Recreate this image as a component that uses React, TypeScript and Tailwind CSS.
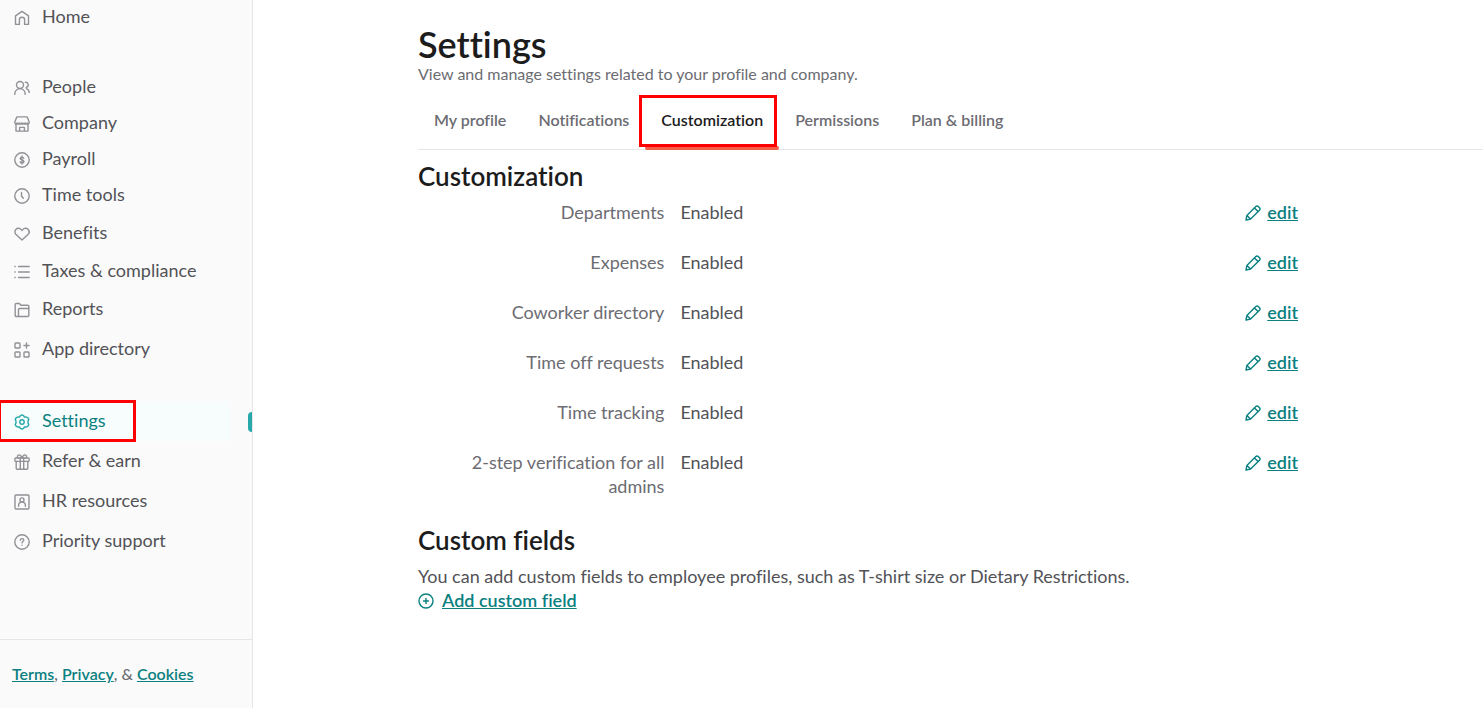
import React from "react";

type NavItem = {
  label: string;
  icon: React.ReactNode;
  active?: boolean;
};

function Icon({ children, className = "" }: { children: React.ReactNode; className?: string }) {
  return (
    <svg
      viewBox="0 0 16 16"
      fill="none"
      stroke="currentColor"
      strokeWidth="1.4"
      strokeLinecap="round"
      strokeLinejoin="round"
      aria-hidden="true"
      className={`size-4 shrink-0 ${className}`}
    >
      {children}
    </svg>
  );
}

const homeIcon = (
  <path d="M1.5 14.4V5.800L8 1.400l6.500 4.400v8.600h-3.900V9.800a2.600 2.600 0 0 0-5.200 0v4.600z" />
);

const peopleIcon = (
  <>
    <circle cx="6" cy="5" r="3.500" />
    <path d="M.8 14.400v-.6a5.200 5.200 0 0 1 10.400 0v.6M11.400 2.200a2.600 2.600 0 0 1 1.400 4.900l-.6.300M12.400 8.600c1.800.6 2.800 1.900 2.800 4" />
  </>
);

const companyIcon = (
  <>
    <path d="M2.800.9h10.400l2 5.100v.6a1.500 1.500 0 0 1-1.500 1.500H2.300A1.500 1.500 0 0 1 .8 6.600V6zM2 8.200v6.900h12V8.200M5.600 15v-3.600h4.800V15" />
    <path strokeDasharray="1.500 1.200" d="M2 7.200h12" />
  </>
);

const payrollIcon = (
  <>
    <circle cx="8" cy="8" r="7.200" />
    <path d="M9.800 6.200C9.500 5.500 8.900 5.100 8 5.100c-1 0-1.800.5-1.800 1.400 0 2 3.700.9 3.700 3 0 .9-.8 1.500-1.900 1.500-1 0-1.700-.5-1.900-1.200M8 4v8" />
  </>
);

const clockIcon = (
  <>
    <circle cx="8" cy="8" r="7.200" />
    <path d="M7.500 4.400V8l1.800 2.200" />
  </>
);

const heartIcon = (
  <path d="M8 14 2.100 8.600C.6 7.100.5 4.700 2 3.300c1.500-1.500 3.900-1.300 5.200.3l.8.9.8-.9c1.300-1.600 3.700-1.800 5.200-.3s1.400 3.800-.1 5.300z" />
);

const listIcon = (
  <path d="M4.600 2.500h10.600M4.600 8h10.600M4.600 13.500h10.600M.9 2.500h.3M.9 8h.3M.9 13.500h.3" />
);

const reportsIcon = (
  <>
    <path d="M4.400 14.500H2.200a1 1 0 0 1-1-1V2.500a1 1 0 0 1 1-1h3.200l1.400 1.700h7a1 1 0 0 1 1 1v9.300a1 1 0 0 1-1 1z" />
    <path d="M4.500 14.400V7.500a1 1 0 0 1 1-1h9.200" />
  </>
);

const appsIcon = (
  <>
    <rect x="1" y="1" width="5" height="5" rx=".8" />
    <rect x="1" y="10" width="5" height="5" rx=".8" />
    <rect x="10" y="10" width="5" height="5" rx=".8" />
    <path d="M12.500 1v5M10 3.500h5" />
  </>
);

const settingsIcon = (
  <>
    <path d="M6.400 1.600 8 .9l1.600.7.9 1.500 1.900-.1 1.500.9.9 1.500-.8 1.700v1.800l.8 1.700-.9 1.500-1.500.9-1.900-.1-.9 1.500-1.600.7-1.600-.7-.9-1.500-1.900.1-1.500-.9-.9-1.500.8-1.700V7.100l-.8-1.700.9-1.500L3.600 3l1.900.1z" />
    <circle cx="8" cy="8" r="2.200" />
  </>
);

const giftIcon = (
  <>
    <rect x=".9" y="4" width="14.200" height="3.400" rx=".8" />
    <path d="M2.200 7.400v6.800a1 1 0 0 0 1 1h9.600a1 1 0 0 0 1-1V7.400M6.300 4v11M9.700 4v11" />
    <path d="M8 4C7.400 2 6.400.9 5 .9 3.300.9 2.800 3 4.200 4M8 4c.6-2 1.600-3.100 3-3.100 1.700 0 2.200 2.100.8 3.100" />
  </>
);

const resourcesIcon = (
  <>
    <rect x="1" y="1" width="14" height="14" rx="1" />
    <circle cx="8" cy="5.900" r="2" />
    <path d="M4.600 12.200v-.6c0-2 1.400-3.500 3.400-3.500s3.400 1.500 3.400 3.500v.6" />
  </>
);

const supportIcon = (
  <>
    <circle cx="8" cy="8" r="7.200" />
    <path d="M6.300 6.200c.1-1 .8-1.600 1.800-1.600s1.700.6 1.700 1.500c0 1.400-1.800 1.400-1.800 2.800M8 11.200v.1" />
  </>
);

const topItems: NavItem[] = [{ label: "Home", icon: homeIcon }];

const teamItems: NavItem[] = [
  { label: "People", icon: peopleIcon },
  { label: "Company", icon: companyIcon },
  { label: "Payroll", icon: payrollIcon },
  { label: "Time tools", icon: clockIcon },
];

const recordItems: NavItem[] = [
  { label: "Benefits", icon: heartIcon },
  { label: "Taxes & compliance", icon: listIcon },
  { label: "Reports", icon: reportsIcon },
];

const appItems: NavItem[] = [{ label: "App directory", icon: appsIcon }];

const accountItems: NavItem[] = [
  { label: "Settings", icon: settingsIcon, active: true },
  { label: "Refer & earn", icon: giftIcon },
  { label: "HR resources", icon: resourcesIcon },
  { label: "Priority support", icon: supportIcon },
];

const tabs = ["My profile", "Notifications", "Customization", "Permissions", "Plan & billing"];

const features = [
  "Departments",
  "Expenses",
  "Coworker directory",
  "Time off requests",
  "Time tracking",
  "2-step verification for all admins",
];

function NavGroup({
  items,
  rowClass,
  className = "",
}: {
  items: NavItem[];
  rowClass: string;
  className?: string;
}) {
  return (
    <ul className={className}>
      {items.map((item) => (
        <li key={item.label} className="relative">
          <a
            href="#"
            aria-current={item.active ? "page" : undefined}
            className={`mr-[22px] flex items-center gap-3 pb-0.5 pl-3.5 ${rowClass} ${
              item.active ? "bg-[#f7fdfd] text-[#0a8080]" : "text-[#525257]"
            }`}
          >
            <Icon className={`mt-1 ${item.active ? "text-[#28a9a9]" : "text-[#919197]"}`}>
              {item.icon}
            </Icon>
            {item.label}
          </a>
          {item.active && (
            <>
              <span className="absolute right-0 top-[11px] h-5 w-1 rounded-l bg-[#28a9a9]" />
              {/* Callout box */}
              <span className="pointer-events-none absolute -left-0.5 -top-px h-[42px] w-[138px] border-3 border-[#ff0000]" />
            </>
          )}
        </li>
      ))}
    </ul>
  );
}

export default function App() {
  return (
    <div className="flex min-h-screen overflow-x-hidden bg-white font-['Lato',sans-serif] text-lg leading-6 [font-variant-ligatures:none]">
      <aside className="flex w-[253px] shrink-0 flex-col border-r border-[#e6e6e8] bg-[#fafafa]">
        <nav aria-label="Main">
          <NavGroup items={topItems} rowClass="h-[34px]" />
          <NavGroup items={teamItems} rowClass="h-9" className="mt-[35px]" />
          <NavGroup items={recordItems} rowClass="h-[38px]" className="mt-px" />
          <NavGroup items={appItems} rowClass="h-10" className="mt-px" />
          <NavGroup items={accountItems} rowClass="h-10" className="mt-8" />
        </nav>
        <footer className="mt-auto border-t border-[#e6e6e8] px-3 py-[22px] text-base leading-6 font-medium text-[#6c6c72]">
          <a href="#" className="font-semibold text-[#0a8080] underline">Terms</a>,{" "}
          <a href="#" className="font-semibold text-[#0a8080] underline">Privacy</a>, &amp;{" "}
          <a href="#" className="font-semibold text-[#0a8080] underline">Cookies</a>
        </footer>
      </aside>

      <main className="min-w-0 flex-1 pl-[165px] pt-6 text-[#525257]">
        <h1 className="text-4xl font-semibold leading-10 text-[#1c1c1c]">Settings</h1>
        <p className="text-base leading-5 text-[#6c6c72]">
          View and manage settings related to your profile and company.
        </p>

        <div role="tablist" className="mt-[7px] flex border-b border-[#e6e6e8]">
          {tabs.map((tab) => {
            const selected = tab === "Customization";
            return (
              <button
                key={tab}
                type="button"
                role="tab"
                aria-selected={selected}
                className={`relative h-[58px] px-4 text-base font-semibold ${
                  selected ? "text-[#1c1c1c]" : "text-[#6c6c72]"
                }`}
              >
                {tab}
                {selected && (
                  <>
                    <span className="absolute inset-x-0 -bottom-px h-1 rounded-full bg-[#f45d48]" />
                    {/* Callout box */}
                    <span className="pointer-events-none absolute -left-1.5 right-0.5 top-1 h-[52px] border-3 border-[#ff0000]" />
                  </>
                )}
              </button>
            );
          })}
        </div>

        <div className="max-w-[880px] pt-2.5">
          <h2 className="text-[26px] font-semibold leading-8 text-[#1c1c1c]">Customization</h2>
          <dl className="mt-2">
            {features.map((feature) => (
              <div key={feature} className="mb-[26px] flex gap-4">
                <dt className="w-[28%] pl-10 text-right text-[#6c6c72]">{feature}</dt>
                <dd className="flex-1">Enabled</dd>
                <dd>
                  <a href="#" className="flex items-center gap-1.5 font-semibold text-[#0a8080]">
                    <Icon className="mt-0.5">
                      <path d="m1 15 .9-4.600L10.800 1.500a1.800 1.800 0 0 1 2.500 0l1.200 1.200a1.800 1.800 0 0 1 0 2.500l-8.900 8.900zM1.900 10.400l3.700 3.700M9.400 2.900l3.700 3.700" />
                    </Icon>
                    <span className="underline">edit</span>
                  </a>
                </dd>
              </div>
            ))}
          </dl>

          <h2 className="text-[26px] font-semibold leading-8 text-[#1c1c1c]">Custom fields</h2>
          <p className="mt-2">
            You can add custom fields to employee profiles, such as T-shirt size or Dietary Restrictions.
          </p>
          <button type="button" className="flex items-center gap-2 font-semibold text-[#0a8080]">
            <Icon className="mt-0.5">
              <circle cx="8" cy="8" r="7" />
              <path d="M8 5.500v5M5.500 8h5" />
            </Icon>
            <span className="underline">Add custom field</span>
          </button>
        </div>
      </main>
    </div>
  );
}
